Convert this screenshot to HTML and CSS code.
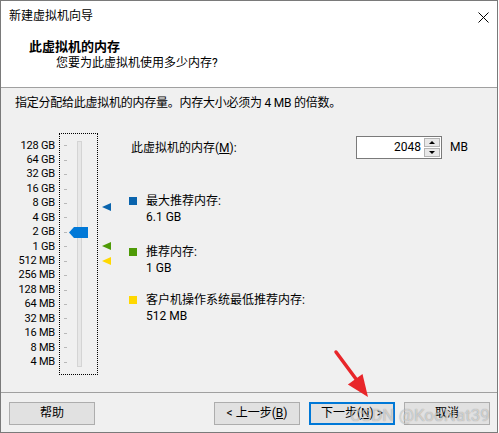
FILE: index.html
```html
<!DOCTYPE html>
<html lang="zh-CN">
<head>
<meta charset="utf-8">
<title>新建虚拟机向导</title>
<link rel="stylesheet" href="styles.css">
</head>
<body>
<div class="window">
  <div class="titlebar">
    <span class="title">新建虚拟机向导</span>
    <svg class="close" width="11" height="11" viewBox="0 0 11 11"><path d="M0.5 0.5L10.5 10.5M10.5 0.5L0.5 10.5" stroke="#000" stroke-width="1" fill="none"/></svg>
  </div>
  <div class="header">
    <div class="h-title">此虚拟机的内存</div>
    <div class="h-sub">您要为此虚拟机使用多少内存?</div>
  </div>
  <div class="content">
    <p class="intro">指定分配给此虚拟机的内存量。内存大小必须为 4 MB 的倍数。</p>
    <div class="main">
      <ul class="scale">
        <li>128 GB</li><li>64 GB</li><li>32 GB</li><li>16 GB</li><li>8 GB</li><li>4 GB</li><li>2 GB</li><li>1 GB</li>
        <li>512 MB</li><li>256 MB</li><li>128 MB</li><li>64 MB</li><li>32 MB</li><li>16 MB</li><li>8 MB</li><li>4 MB</li>
      </ul>
      <div class="slider">
        <div class="ticks">
          <span></span><span></span><span></span><span></span><span></span><span></span><span></span><span></span>
          <span></span><span></span><span></span><span></span><span></span><span></span><span></span><span></span>
        </div>
        <div class="track"></div>
        <div class="thumb"></div>
      </div>
      <div class="markers">
        <span class="marker m-blue" style="top:70px"></span>
        <span class="marker m-green" style="top:109px"></span>
        <span class="marker m-yellow" style="top:124px"></span>
      </div>
      <div class="panel">
        <div class="mem-row">
          <span class="mem-label">此虚拟机的内存(<u>M</u>):</span>
          <div class="spin">
            <span class="spin-value">2048</span>
            <div class="spin-btns">
              <span class="spin-btn up"></span>
              <span class="spin-btn down"></span>
            </div>
          </div>
          <span class="unit">MB</span>
        </div>
        <div class="legend">
          <div class="item"><span class="swatch s-blue"></span><div>最大推荐内存:<br>6.1 GB</div></div>
          <div class="item item-2"><span class="swatch s-green"></span><div>推荐内存:<br>1 GB</div></div>
          <div class="item item-3"><span class="swatch s-yellow"></span><div>客户机操作系统最低推荐内存:<br>512 MB</div></div>
        </div>
      </div>
    </div>
  </div>
  <div class="footer">
    <button class="btn">帮助</button>
    <div class="nav">
      <button class="btn">&lt; 上一步(<u>B</u>)</button>
      <button class="btn focus">下一步(<u>N</u>) &gt;</button>
      <button class="btn">取消</button>
    </div>
  </div>
  <svg class="arrow" width="50" height="60" viewBox="0 0 50 60">
    <path d="M6 7L29 38" stroke="#e8262a" stroke-width="3.5" stroke-linecap="round" fill="none"/>
    <polygon points="38,52 32.5,29 17.9,39.4" fill="#e8262a"/>
  </svg>
  <div class="watermark">CSDN @KooNat39</div>
</div>
</body>
</html>
```
FILE: styles.css
```css
* { box-sizing: border-box; }

body {
  margin: 0;
  background: #fff;
  font-family: Roboto, "Noto Sans CJK SC", sans-serif;
  font-size: 12px;
  color: #000;
}

.window {
  position: relative;
  width: 498px;
  height: 433px;
  border: 1px solid #7a7a7a;
  background: #f0f0f0;
  display: flex;
  flex-direction: column;
}

.titlebar {
  height: 30px;
  background: #fff;
  display: flex;
  align-items: center;
  justify-content: space-between;
  padding: 0 8px 0 8px;
  line-height: 17px;
}

.close { margin-top: 2px; }

.header {
  height: 57px;
  background: #fff;
  border-bottom: 1px solid #a0a0a0;
  padding-top: 7px;
  line-height: 17px;
}

.h-title {
  padding-left: 28px;
  font-weight: bold;
  font-size: 13px;
}

.h-sub { padding-left: 55px; }

.content {
  flex: 1;
  padding: 7px 0 0 14px;
}

.intro {
  margin: 0;
  line-height: 17px;
  letter-spacing: -0.25px;
}

.main {
  display: flex;
  align-items: flex-start;
  margin-top: 21px;
}

.scale {
  list-style: none;
  margin: 0 4px 0 0;
  padding: 5.5px 0 0 0;
  width: 40px;
  text-align: right;
  font-size: 11px;
  letter-spacing: -0.2px;
  line-height: 14.44px;
  white-space: nowrap;
}

.slider {
  position: relative;
  width: 39px;
  height: 242px;
  border: 1px dotted #000;
  display: flex;
}

.ticks {
  padding: 4.5px 0 0 4px;
  display: flex;
  flex-direction: column;
}

.ticks span {
  display: block;
  width: 3px;
  height: 14.44px;
  background: linear-gradient(#b8b8b8, #b8b8b8) center / 3px 1px no-repeat;
}

.track {
  width: 5px;
  margin: 7px 0 7px 10px;
  background: #e7e7e7;
  border: 1px solid #d4d4d4;
}

.thumb {
  position: absolute;
  left: 9px;
  top: 93px;
  width: 19px;
  height: 11px;
  background: #0078d7;
  clip-path: polygon(0 50%, 5px 0, 100% 0, 100% 100%, 5px 100%);
}

.markers {
  position: relative;
  width: 9px;
  height: 242px;
  margin-left: 4px;
}

.marker {
  position: absolute;
  left: 0;
  width: 0;
  height: 0;
  border-top: 4px solid transparent;
  border-bottom: 4px solid transparent;
  border-right: 9px solid;
}

.m-blue { border-right-color: #0a64ad; }
.m-green { border-right-color: #4e9a06; }
.m-yellow { border-right-color: #ffd800; }

.panel {
  flex: 1;
  margin-left: 18px;
}

.mem-row {
  display: flex;
  align-items: center;
  height: 23px;
  margin-top: 3px;
}

.mem-label {
  width: 227px;
  padding-left: 2px;
  padding-top: 2px;
  line-height: 17px;
}

.spin {
  display: flex;
  width: 86px;
  height: 23px;
  border: 1px solid #7a7a7a;
  background: #fff;
}

.spin-value {
  flex: 1;
  text-align: right;
  padding-right: 3px;
  line-height: 21px;
}

.spin-btns {
  width: 17px;
  display: flex;
  flex-direction: column;
  gap: 1px;
  padding: 1px 1px 1px 0;
}

.spin-btn {
  flex: 1;
  background: #e8e8e8;
  border: 1px solid #b4b4b4;
  display: flex;
  align-items: center;
  justify-content: center;
}

.spin-btn::after {
  content: "";
  width: 0;
  height: 0;
  border-left: 3px solid transparent;
  border-right: 3px solid transparent;
}

.up::after { border-bottom: 3px solid #000; }
.down::after { border-top: 3px solid #000; }

.unit {
  margin-left: 8px;
  line-height: 17px;
}

.legend {
  margin-top: 34px;
  line-height: 16px;
}

.item { display: flex; }
.item-2 { margin-top: 19px; }
.item-3 { margin-top: 16px; }

.swatch {
  width: 8px;
  height: 8px;
  margin: 4px 9px 0 0;
  flex: none;
}

.s-blue { background: #0a64ad; }
.s-green { background: #4e9a06; }
.s-yellow { background: #ffd800; }

.footer {
  height: 40px;
  border-top: 1px solid #a0a0a0;
  padding: 9px 7px 7px 8px;
  display: flex;
}

.nav {
  margin-left: auto;
  display: flex;
  gap: 9px;
}

.btn {
  width: 86px;
  height: 23px;
  padding: 0;
  border: 1px solid #adadad;
  background: #e1e1e1;
  font: inherit;
  color: #000;
  line-height: 19px;
}

.btn.focus { border: 2px solid #0078d7; }

.arrow {
  position: absolute;
  left: 329px;
  top: 344px;
}

.watermark {
  position: absolute;
  left: 349px;
  top: 404px;
  font-family: Roboto, sans-serif;
  font-size: 17px;
  line-height: 20px;
  color: rgba(255, 255, 255, 0.55);
  text-shadow: 0 0 1px rgba(0, 0, 0, 0.4);
  white-space: nowrap;
}
```
